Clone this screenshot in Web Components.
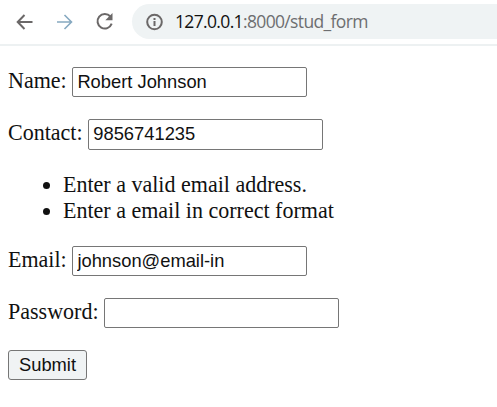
<!DOCTYPE html>
<html lang="en"><head><meta charset="utf-8"><title>stud_form</title>
<style>body{margin:0;background:#fff;color:#111;overflow:hidden;font:22.03px/26px "Liberation Serif",serif}</style></head>
<body>
<browser-bar><span slot="host">127.0.0.1</span><span slot="path">:8000/stud_form</span></browser-bar>
<student-form>
<form-field label="Name:" value="Robert Johnson"></form-field>
<form-field label="Contact:" value="9856741235" class="tall"></form-field>
<error-list><li>Enter a valid email address.</li><li>Enter a email in correct format</li></error-list>
<form-field label="Email:" value="johnson@email-in"></form-field>
<form-field label="Password:" value=""></form-field>
<submit-button>Submit</submit-button>
</student-form>
<script>
const define=(name,html,setup)=>customElements.define(name,class extends HTMLElement{
  constructor(){super();this.attachShadow({mode:'open'}).innerHTML=html}
  connectedCallback(){if(setup)setup(this)}
});
define('browser-bar',`<style>
:host{display:flex;box-sizing:border-box;height:46px;padding:4px 0 5px 15px;border-bottom:2px solid #edf1f2;align-items:center;font:17.5px/35px "Open Sans",sans-serif}
svg{display:block;flex:none;fill:none;stroke:#6b6868;stroke-width:2}
.next{margin-left:20px}.reload{margin-left:19px}
.address{display:flex;align-items:center;flex:1;height:35px;margin-left:18px;padding-left:13px;border-radius:18px 0 0 18px;background:#eff3f4;white-space:nowrap}
.info{margin-right:12px}.url{letter-spacing:-.65px;color:#6d6e70}.host{color:#111}
</style>
<svg width="20" height="20" viewBox="0 0 20 20"><path d="M17.5 10H3M9.5 3 2.7 10l6.8 7"/></svg>
<svg class="next" width="20" height="20" viewBox="0 0 20 20" style="stroke:#86a9c0;stroke-width:1.6"><path d="M2 10h14M9.5 3l7 7-7 7"/></svg>
<svg class="reload" width="20" height="20" viewBox="0 0 20 20"><path d="M16.4 4.5A7.3 7.3 0 1 0 17.7 11.7"/><path d="M18.5 1v7.2h-7.2z" fill="#6b6868" stroke="none"/></svg>
<div class="address"><svg class="info" width="18" height="18" viewBox="0 0 18 18"><circle cx="9.5" cy="9" r="7.3"/><path d="M9.5 8v5M9.5 5v2"/></svg><span class="url"><span class="host"><slot name="host"></slot></span><slot name="path"></slot></span></div>`);
define('student-form',`<style>:host{display:flex;flex-direction:column;align-items:flex-start;gap:22px;padding:21px 8px}</style><slot></slot>`);
define('form-field',`<style>
:host{display:flex;gap:5.7px;height:30px}:host(.tall){height:31px}
label{display:flex;gap:inherit;white-space:nowrap}.label{line-height:27px}
input{box-sizing:border-box;width:235px;height:100%;margin:0;padding:0 4px 1px;border:1px solid #767676;border-radius:2px;background:#fff;color:#111;font:18.33px "Liberation Sans",sans-serif;outline:0}
</style><label><span class="label"></span><input></label>`,e=>{
e.shadowRoot.querySelector('.label').textContent=e.getAttribute('label');
const i=e.shadowRoot.querySelector('input');i.value=e.getAttribute('value');if(e.getAttribute('label')==='Password:')i.type='password'});
define('error-list',`<style>:host{display:block}ul{margin:0;padding:0 0 0 55px;line-height:26px}</style><ul><slot></slot></ul>`);
define('submit-button',`<style>:host{display:block}button{display:block;box-sizing:border-box;width:79px;height:30px;margin:0;padding:0;border:1px solid #767676;border-radius:3px;background:#f0f3f4;color:#111;font:18.33px "Liberation Sans",sans-serif}</style><button type="button"><slot></slot></button>`);
</script></body></html>
